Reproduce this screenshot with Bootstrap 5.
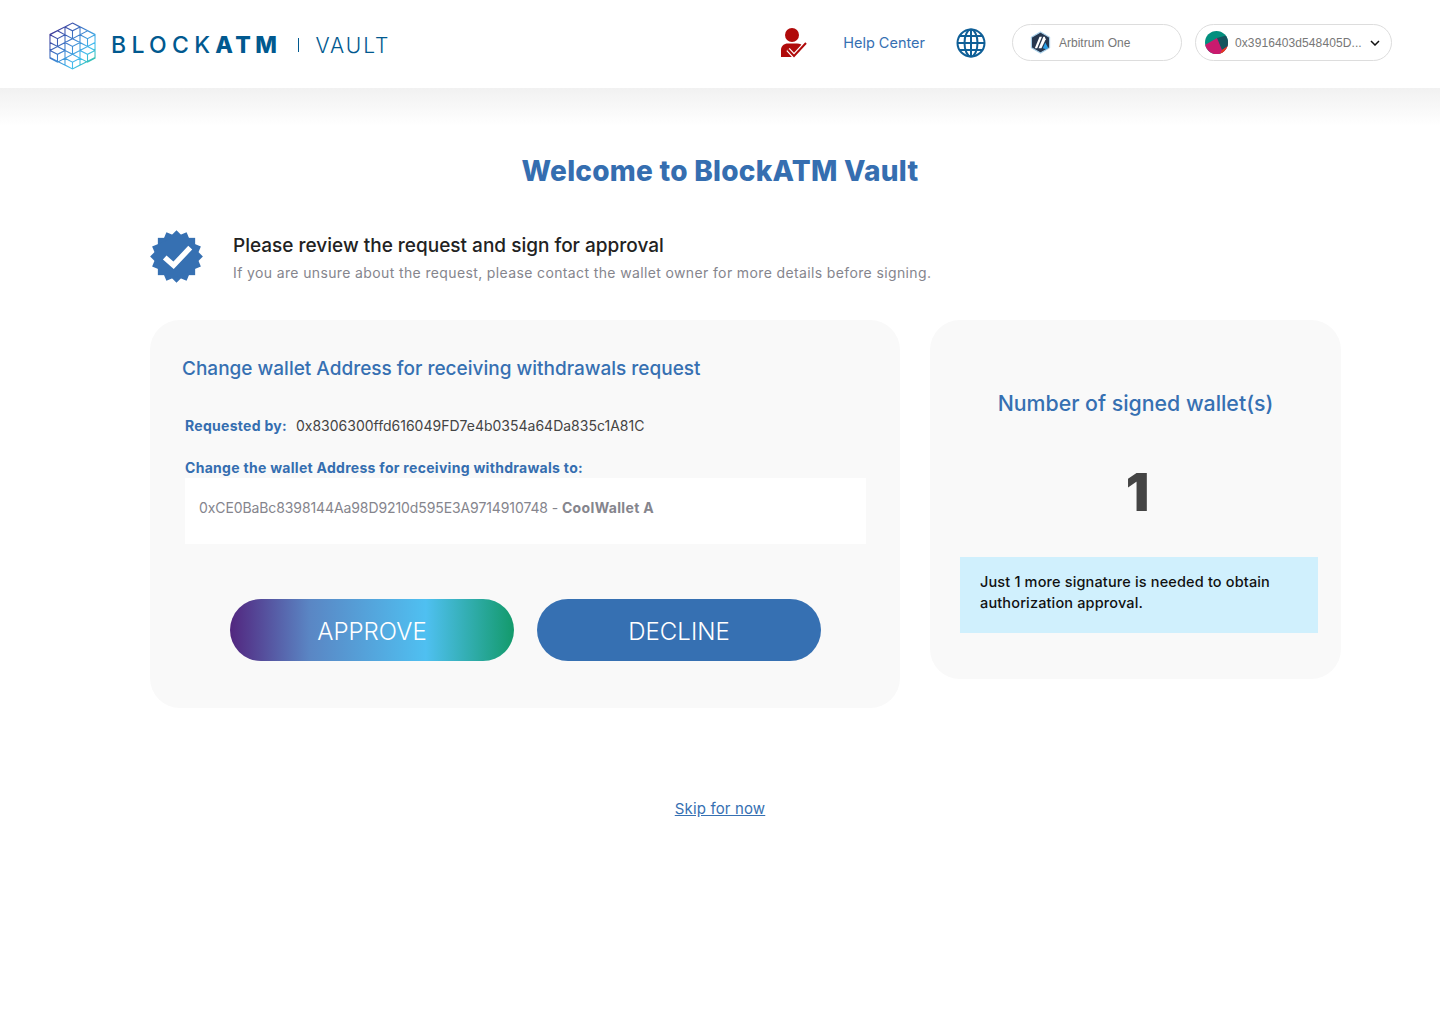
<!DOCTYPE html>
<html lang="en">
  <head>
    <meta charset="UTF-8" />
    <title>BlockATM Vault</title>
    <link
      href="https://cdn.jsdelivr.net/npm/bootstrap@5.3.2/dist/css/bootstrap.min.css"
      rel="stylesheet"
    />
    <style>
      body {
        background: #fff;
        font-family: "Inter", "Liberation Sans", sans-serif;
        color: #222;
        min-height: 1024px;
      }
      .top-bar {
        height: 88px;
        padding: 0 48px 0 49px;
        background: #fff;
      }
      .top-fade {
        height: 38px;
        background: linear-gradient(#f1f1f1, #fff);
      }
      .brand-box {
        margin-top: 4px;
      }
      .brand-text {
        margin-bottom: 2px;
      }
      .brand-name {
        color: #01598f;
        font-size: 23px;
        font-weight: 500;
        letter-spacing: 5.3px;
        margin-left: 15px;
        line-height: 1;
      }
      .brand-name b {
        font-weight: 800;
        letter-spacing: 4.4px;
      }
      .brand-sep {
        width: 1px;
        height: 14px;
        background: #01598f;
        margin: 0 16px 0 17px;
      }
      .brand-sub {
        color: #01598f;
        font-size: 21px;
        font-weight: 300;
        letter-spacing: 2px;
        line-height: 1;
      }
      .tools-box {
        margin-bottom: 3px;
      }
      .help-link {
        color: #3670b2;
        font-size: 14.5px;
        text-decoration: none;
        margin: 0 31px 0 36px;
      }
      .globe-icon {
        margin-right: 26px;
      }
      .pill-box {
        height: 37px;
        border: 1px solid #ddd;
        border-radius: 19px;
        font-family: "Liberation Sans", sans-serif;
        font-size: 12px;
        color: #777;
        background: #fff;
      }
      .pill-net {
        width: 170px;
        padding-left: 17px;
        margin-right: 13px;
      }
      .pill-wallet {
        width: 197px;
        padding-left: 9px;
        letter-spacing: 0.1px;
      }
      .wallet-addr {
        margin-left: -1px;
      }
      .main-title {
        color: #356eb0;
        font-size: 28px;
        font-weight: 800;
        letter-spacing: 0.25px;
        margin: 28px 0 0;
        line-height: 34px;
        text-align: center;
      }
      .page-body {
        padding: 0 99px 0 150px;
      }
      .notice-row {
        margin-top: 41px;
        height: 54px;
      }
      .notice-text {
        margin-left: 30px;
        padding-top: 5px;
      }
      .notice-head {
        font-size: 19px;
        font-weight: 500;
        color: #222;
        line-height: 24px;
      }
      .notice-sub {
        font-size: 14px;
        letter-spacing: 0.37px;
        color: #85858d;
        line-height: 20px;
        margin-top: 5px;
      }
      .panel-wrap {
        margin-top: 37px;
        gap: 30px;
      }
      .panel-left {
        width: 750px;
        height: 388px;
        background: #f9f9f9;
        border-radius: 30px;
        padding: 35px 34px 0 32px;
      }
      .panel-right {
        width: 411px;
        height: 359px;
        background: #f9f9f9;
        border-radius: 30px;
        padding: 69px 23px 0 30px;
      }
      .panel-title {
        color: #3670b2;
        font-size: 19px;
        font-weight: 500;
        line-height: 28px;
      }
      .signed-title {
        font-size: 21.3px;
        padding-right: 7px;
      }
      .req-row {
        margin: 33px 0 0 3px;
        font-size: 14px;
        line-height: 20px;
        color: #444;
      }
      .change-label {
        margin-top: 22px;
      }
      .req-label {
        color: #356eb0;
        font-weight: 700;
        letter-spacing: 0.29px;
        margin-right: 5px;
      }
      .addr-box {
        margin: 0 0 0 3px;
        height: 66px;
        background: #fff;
        padding: 0 14px 7px;
        font-size: 14px;
        letter-spacing: -0.1px;
        color: #85858d;
      }
      .addr-box b {
        letter-spacing: 0.35px;
      }
      .btn-row {
        gap: 23px;
        margin: 55px 0 0 3px;
      }
      .approve-btn,
      .decline-btn {
        width: 284px;
        height: 62px;
        border: 0;
        border-radius: 31px;
        color: #fff;
        font-size: 24px;
        font-weight: 300;
        padding-top: 4px;
      }
      .approve-btn {
        background: linear-gradient(90deg, #52267f 0%, #5a86c4 28%, #4fc0f1 69%, #139a6b 100%);
      }
      .decline-btn {
        background: #3670b2;
      }
      .signed-count {
        font-size: 52px;
        font-weight: 900;
        color: #444;
        line-height: 60px;
        text-align: center;
        margin-top: 46px;
        padding-right: 3px;
      }
      .signed-note {
        background: #d0f0fd;
        color: #111;
        font-size: 14.5px;
        font-weight: 500;
        letter-spacing: 0.15px;
        line-height: 21px;
        padding: 14px 20px;
        margin-top: 34px;
        height: 76px;
      }
      .skip-link {
        display: block;
        text-align: center;
        margin-top: 90px;
        color: #3670b2;
        font-size: 15px;
        letter-spacing: 0.15px;
      }
    </style>
  </head>
  <body>
    <header class="top-bar d-flex align-items-center justify-content-between">
      <div class="brand-box d-flex align-items-center">
        <svg width="47" height="48" viewBox="0 0 48 48" fill="none">
          <defs>
            <linearGradient id="logoGrad" gradientUnits="userSpaceOnUse" x1="2" y1="4" x2="44" y2="46">
              <stop offset="0" stop-color="#3f2a8c" />
              <stop offset="0.45" stop-color="#3f82cf" />
              <stop offset="0.75" stop-color="#44bff0" />
              <stop offset="1" stop-color="#2fc294" />
            </linearGradient>
          </defs>
          <path
            stroke="url(#logoGrad)"
            stroke-width="1.1"
            d="M24 .5L47 12.2V35.8L24 47.5 1 35.8V12.2Z
            M24 .5l7.67 4v8l-7.67 4-7.67-4v-8zM16.33 4.5l7.67 4 7.67-4M24 8.500v8
            M8.670 8.500l7.67 4v8l-7.67 4-7.67-4v-8zM1 12.500l7.67 4 7.670-4M8.670 16.500v8
            M39.330 8.500l7.67 4v8l-7.67 4-7.67-4v-8zM31.660 12.500l7.670 4 7.670-4M39.330 16.500v8
            M24 16.500l7.67 4v8l-7.67 4-7.67-4v-8zM16.330 20.500l7.670 4 7.670-4M24 24.500v8
            M8.670 24.500l7.67 4v8l-7.67 4-7.67-4v-8zM1 28.500l7.67 4 7.670-4M8.670 32.500v8
            M39.330 24.500l7.67 4v8l-7.67 4-7.67-4v-8zM31.660 28.500l7.670 4 7.670-4M39.330 32.500v8
            M24 32.500l7.67 4v7l-7.67 4-7.67-4v-7zM16.330 36.500l7.670 4 7.670-4M24 40.500v7"
          />
        </svg>
        <div class="brand-text d-flex align-items-center">
          <span class="brand-name">BLOCK<b>ATM</b></span>
          <span class="brand-sep"></span>
          <span class="brand-sub">VAULT</span>
        </div>
      </div>
      <div class="tools-box d-flex align-items-center">
        <svg width="27" height="30" viewBox="0 0 27 30">
          <circle cx="12" cy="7" r="7" fill="#b00a0a" />
          <path d="M1 29v-7c0-4 3-6.500 7-6.500h9c3 0 5 1 6 3L15 29Z" fill="#b00a0a" />
          <path d="M8 21.500l6 6.500L26 15" fill="none" stroke="#fff" stroke-width="4.500" />
          <path d="M8 21.500l6 6.500L26 15" fill="none" stroke="#b00a0a" stroke-width="2" />
        </svg>
        <a href="#" class="help-link">Help Center</a>
        <svg class="globe-icon" width="30" height="30" viewBox="0 0 30 30" fill="none" stroke="#0f5f97" stroke-width="2">
          <circle cx="15" cy="15" r="13.500" />
          <ellipse cx="15" cy="15" rx="6.500" ry="13.500" />
          <path d="M15 1.500v27M1.500 15h27M3.500 8h23M3.500 22h23" />
        </svg>
        <div class="pill-box pill-net d-flex align-items-center gap-2">
          <svg width="21" height="23" viewBox="0 0 22 24">
            <path d="M11 1l9.500 5.500v11L11 23 1.500 17.500v-11Z" fill="#26374f" stroke="#a9cfe8" stroke-width="1.200" />
            <path d="M5 18L10 6h2.500L7.500 18Z" fill="#fff" />
            <path d="M9 18l5-12h1.500l1 2.500L12 18Z" fill="#fff" />
            <path d="M13.500 18l2.500-6 3 5.500-2 1.500Z" fill="#2aa0e8" />
          </svg>
          <span>Arbitrum One</span>
        </div>
        <div class="pill-box pill-wallet d-flex align-items-center gap-2">
          <svg width="23" height="23" viewBox="0 0 23 23" class="flex-shrink-0">
            <defs>
              <clipPath id="avatarClip"><circle cx="11.500" cy="11.500" r="11.500" /></clipPath>
            </defs>
            <g clip-path="url(#avatarClip)">
              <rect width="23" height="23" fill="#028f7e" />
              <path d="M0 14L12 7l11 3v13H0Z" fill="#c91a6e" />
              <path d="M12 7l11-3v11l-6 4Z" fill="#16535e" />
              <path d="M17 19l6-4v8h-8Z" fill="#e8391d" />
            </g>
          </svg>
          <span class="wallet-addr text-nowrap">0x3916403d548405D...</span>
          <svg width="10" height="6" viewBox="0 0 10 6" fill="none" stroke="#111" stroke-width="1.500" class="flex-shrink-0">
            <path d="M1 1l4 4 4-4" />
          </svg>
        </div>
      </div>
    </header>
    <div class="top-fade"></div>

    <h1 class="main-title">Welcome to BlockATM Vault</h1>

    <main class="page-body">
      <div class="notice-row d-flex align-items-center">
        <svg width="53" height="53" viewBox="-27 -27 54 54">
          <g fill="#3670b2">
            <rect x="-19" y="-19" width="38" height="38" />
            <rect x="-19" y="-19" width="38" height="38" transform="rotate(22.5)" />
            <rect x="-19" y="-19" width="38" height="38" transform="rotate(45)" />
            <rect x="-19" y="-19" width="38" height="38" transform="rotate(67.5)" />
          </g>
          <path d="M-12 1l9 8L14-9" fill="none" stroke="#fff" stroke-width="5.500" />
        </svg>
        <div class="notice-text">
          <div class="notice-head">Please review the request and sign for approval</div>
          <div class="notice-sub">If you are unsure about the request, please contact the wallet owner for more details before signing.</div>
        </div>
      </div>

      <div class="panel-wrap d-flex align-items-start">
        <section class="panel-left">
          <div class="panel-title">Change wallet Address for receiving withdrawals request</div>
          <div class="req-row"><span class="req-label">Requested by:</span> 0x8306300ffd616049FD7e4b0354a64Da835c1A81C</div>
          <div class="req-row change-label"><span class="req-label">Change the wallet Address for receiving withdrawals to:</span></div>
          <div class="addr-box d-flex align-items-center">
            <span>0xCE0BaBc8398144Aa98D9210d595E3A9714910748 - <b>CoolWallet A</b></span>
          </div>
          <div class="btn-row d-flex justify-content-center">
            <button class="approve-btn">APPROVE</button>
            <button class="decline-btn">DECLINE</button>
          </div>
        </section>
        <aside class="panel-right">
          <div class="panel-title signed-title text-center">Number of signed wallet(s)</div>
          <div class="signed-count">1</div>
          <div class="signed-note">Just 1 more signature is needed to obtain authorization approval.</div>
        </aside>
      </div>
    </main>

    <a href="#" class="skip-link">Skip for now</a>

    <script src="https://cdn.jsdelivr.net/npm/bootstrap@5.3.2/dist/js/bootstrap.bundle.min.js"></script>
  </body>
</html>
